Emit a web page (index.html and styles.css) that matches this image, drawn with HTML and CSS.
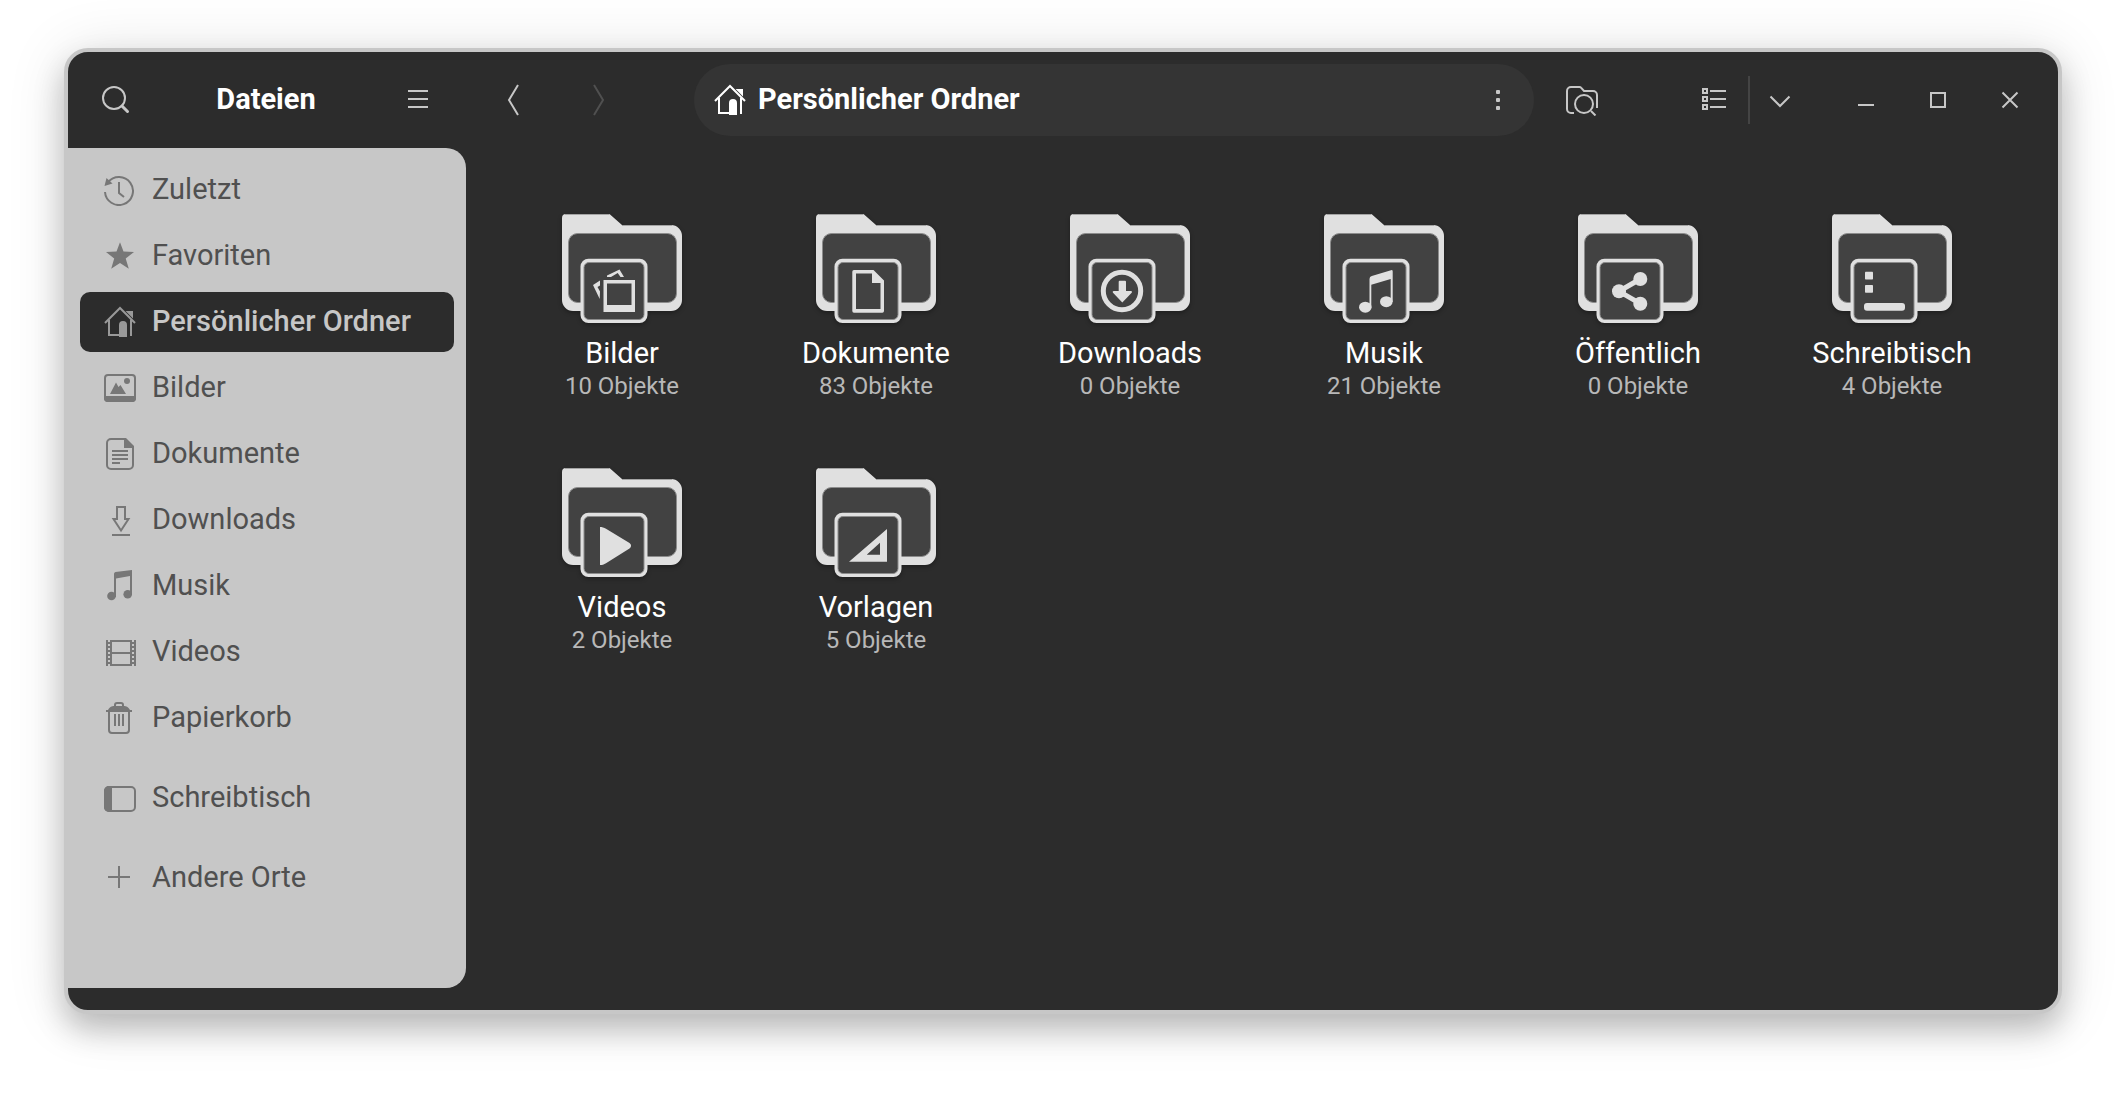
FILE: index.html
```html
<!DOCTYPE html>
<html lang="de">
<head>
<meta charset="utf-8">
<meta name="viewport" content="width=device-width, initial-scale=1">
<title>Dateien</title>
<link rel="stylesheet" href="styles.css">
</head>
<body>
<svg class="defs" aria-hidden="true">
  <symbol id="home" viewBox="0 0 32 32">
    <path d="M1 17 16 2 31 17M5 14V29H17M27 14V30" fill="none" stroke="currentColor" stroke-width="2"/>
    <path d="M16 30V19a3 3 0 0 1 3-3 3 3 0 0 1 3 3V30ZM24 6h4v4Z" fill="currentColor"/>
  </symbol>
  <symbol id="folder" viewBox="0 0 128 128">
    <path d="M8 6H51.500L64 17H113a11 11 0 0 1 11 11V92a11 11 0 0 1-11 11H15A11 11 0 0 1 4 92V10a4 4 0 0 1 4-4Z" fill="#e0e0e0"/>
    <path d="M7 6.500H51.500M64 17.500H114" stroke="#a4a4a4" fill="none"/>
    <rect x="10.500" y="25.500" width="108" height="69" rx="9" fill="#424242" stroke="#8c8c8c"/>
    <rect x="22.500" y="50.700" width="67" height="64.300" rx="8" fill="#e0e0e0"/>
    <rect x="26" y="54.500" width="60" height="57" rx="5" fill="#424242" stroke="#8c8c8c"/>
  </symbol>
</svg>

<div class="window">
  <header class="titlebar">
    <div class="titlebar-side">
      <button class="icon-button" type="button" aria-label="Suchen">
        <svg class="icon" viewBox="0 0 32 32"><circle cx="16" cy="14" r="11"/><path d="m24 22 5.500 5.500" stroke-width="3" stroke-linecap="round"/></svg>
      </button>
      <h1 class="title label">Dateien</h1>
      <button class="icon-button" type="button" aria-label="Menü">
        <svg class="icon" viewBox="0 0 32 32"><path d="M6 7H26M6 15H26M6 23H26"/></svg>
      </button>
    </div>
    <div class="titlebar-main">
      <div class="history">
        <button class="icon-button" type="button" aria-label="Zurück">
          <svg class="icon" viewBox="0 0 32 32"><path d="M20 1 11 16 20 31"/></svg>
        </button>
        <button class="icon-button" type="button" aria-label="Vor" disabled>
          <svg class="icon" viewBox="0 0 32 32"><path d="M10 1 19 16 10 31"/></svg>
        </button>
      </div>
      <div class="pathbar">
        <button class="crumb" type="button">
          <svg class="icon" viewBox="0 0 32 32"><use href="#home"/></svg>
          <span class="label">Persönlicher Ordner</span>
        </button>
        <button class="icon-button" type="button" aria-label="Ordnermenü">
          <svg class="icon solid" viewBox="0 0 32 32"><rect x="14" y="6" width="4" height="4" rx="1"/><rect x="14" y="14" width="4" height="4" rx="1"/><rect x="14" y="22" width="4" height="4" rx="1"/></svg>
        </button>
      </div>
      <button class="icon-button" type="button" aria-label="Ordner durchsuchen">
        <svg class="icon" viewBox="0 0 32 32"><path d="M8 29H5a4 4 0 0 1-4-4V7a4 4 0 0 1 4-4h8.500a2 2 0 0 1 1.500.700L18 7h9a4 4 0 0 1 4 4V24"/><circle cx="18" cy="20" r="9"/><path d="m25 27 4.500 4.500"/></svg>
      </button>
      <div class="view-switch">
        <button class="icon-button" type="button" aria-label="Listenansicht">
          <svg class="icon" viewBox="0 0 32 32"><path d="M5 5h4v4H5ZM5 13h4v4H5ZM5 21h4v4H5ZM12 7H28M12 15H28M12 23H28"/></svg>
        </button>
        <button class="icon-button view-options" type="button" aria-label="Ansichtsoptionen">
          <svg class="icon" viewBox="0 0 32 32"><path d="m6.500 12.500 9.500 9.500 9.500-9.500"/></svg>
        </button>
      </div>
      <div class="window-controls">
        <button class="icon-button" type="button" aria-label="Minimieren">
          <svg class="icon" viewBox="0 0 32 32"><path d="M8 21H24"/></svg>
        </button>
        <button class="icon-button" type="button" aria-label="Maximieren">
          <svg class="icon" viewBox="0 0 32 32"><path d="M9 9H23V23H9Z"/></svg>
        </button>
        <button class="icon-button" type="button" aria-label="Schließen">
          <svg class="icon" viewBox="0 0 32 32"><path d="M8.500 8.500 23.500 23.500M23.500 8.500 8.500 23.500"/></svg>
        </button>
      </div>
    </div>
  </header>

  <div class="body">
    <nav class="sidebar" aria-label="Orte">
      <a class="place" href="#zuletzt">
        <svg class="icon" viewBox="0 0 32 32"><path d="M1 18A14 14 0 1 0 4 8.300"/><path d="M15 8V19L20 23"/><path d="M.500 12 2.500 4 8.500 9.500Z" fill="currentColor" stroke="none"/></svg>
        <span class="label">Zuletzt</span>
      </a>
      <a class="place" href="#favoriten">
        <svg class="icon solid" viewBox="0 0 32 32"><path d="m16 2.300 3.500 9.200L30 12l-8.300 6.500 3.100 10.300L16 23l-8.800 5.800 3-10.300L2 12l10.500-.500Z"/></svg>
        <span class="label">Favoriten</span>
      </a>
      <a class="place active" href="#home-folder" aria-current="page">
        <svg class="icon" viewBox="0 0 32 32"><use href="#home"/></svg>
        <span class="label">Persönlicher Ordner</span>
      </a>
      <a class="place" href="#bilder">
        <svg class="icon" viewBox="0 0 32 32"><rect x="1" y="3" width="30" height="26" rx="3"/><path d="M0 24H32V26a4 4 0 0 1-4 4H4a4 4 0 0 1-4-4ZM6 22l6-11.500 2.500 4.500 2-2L22 22Z" fill="currentColor" stroke="none"/><circle cx="23" cy="9" r="3" fill="currentColor" stroke="none"/></svg>
        <span class="label">Bilder</span>
      </a>
      <a class="place" href="#dokumente">
        <svg class="icon" viewBox="0 0 32 32"><path d="M21 1H7A4 4 0 0 0 3 5V27a4 4 0 0 0 4 4H25a4 4 0 0 0 4-4V9"/><path d="M20 0H22L30 8v2H20Z" fill="currentColor" stroke="none"/><path d="M8 13H24M8 17H24M8 21H24M8 25H16"/></svg>
        <span class="label">Dokumente</span>
      </a>
      <a class="place" href="#downloads">
        <svg class="icon" viewBox="0 0 32 32"><path d="M13 15V3H21V15H24.500L17 26.500 9.500 15ZM8 31H26"/></svg>
        <span class="label">Downloads</span>
      </a>
      <a class="place" href="#musik">
        <svg class="icon solid" viewBox="0 0 32 32"><path d="M10 4a2 2 0 0 1 1.500-2L28 0V25H26V6L12 8.500V27H10Z"/><circle cx="7.500" cy="26" r="4.300"/><circle cx="23.700" cy="24.300" r="4.300"/></svg>
        <span class="label">Musik</span>
      </a>
      <a class="place" href="#videos">
        <svg class="icon" viewBox="0 0 32 32"><path d="M3 4V30M7 4V30M27 4V30M31 4V30M7 5H27M7 17H27M7 29H27"/><path d="M5 6V30M29 6V30" stroke-dasharray="2 2"/></svg>
        <span class="label">Videos</span>
      </a>
      <a class="place" href="#papierkorb">
        <svg class="icon" viewBox="0 0 32 32"><path d="M5 9V28a3 3 0 0 0 3 3H22a3 3 0 0 0 3-3V9M11 12V24M15 12V24M19 12V24M11 5V3a2 2 0 0 1 2-2h4a2 2 0 0 1 2 2V5"/><path d="M2 8H4C6 4 9 4 11 4h8c2 0 5 0 7 4h2v2H2Z" fill="currentColor" stroke="none"/></svg>
        <span class="label">Papierkorb</span>
      </a>
      <a class="place apart" href="#schreibtisch">
        <svg class="icon" viewBox="0 0 32 32"><rect x="1" y="5" width="30" height="24" rx="4"/><path d="M8 4V30H5a5 5 0 0 1-5-5V9a5 5 0 0 1 5-5Z" fill="currentColor" stroke="none"/></svg>
        <span class="label">Schreibtisch</span>
      </a>
      <a class="place apart" href="#andere">
        <svg class="icon" viewBox="0 0 32 32"><path d="M15 4V26M4 15H26"/></svg>
        <span class="label">Andere Orte</span>
      </a>
    </nav>

    <main class="files">
      <a class="file" href="#bilder">
        <svg class="folder" viewBox="0 0 128 128"><use href="#folder"/><path d="M45.500 72H77V104H45.500ZM49 75.500V97H73.500V75.500Z" fill-rule="evenodd"/><path d="M49 69v-1.500L61.500 61.500 66 69H62.500L59.700 65 53 69ZM42 72.500 35 77 41.700 91 42 83.500 39.500 79 42 77.500Z"/></svg>
        <span class="name">Bilder</span><span class="count">10 Objekte</span>
      </a>
      <a class="file" href="#dokumente">
        <svg class="folder" viewBox="0 0 128 128"><use href="#folder"/><path d="M42 62H61.500L72 72.500V103a1.700 1.700 0 0 1-1.700 1.700H42A1.700 1.700 0 0 1 40.300 103V63.700A1.700 1.700 0 0 1 42 62ZM44 65.500V101H68.500V75H60V65.500Z" fill-rule="evenodd"/></svg>
        <span class="name">Dokumente</span><span class="count">83 Objekte</span>
      </a>
      <a class="file" href="#downloads">
        <svg class="folder" viewBox="0 0 128 128"><use href="#folder"/><circle cx="56" cy="83" r="18.700" class="ring"/><path d="M54 72.700h5a1 1 0 0 1 1 1V83h5a1 1 0 0 1 .700 1.700L56.300 94.500 47 84.700A1 1 0 0 1 47.700 83h5V73.700a1 1 0 0 1 1-1Z"/></svg>
        <span class="name">Downloads</span><span class="count">0 Objekte</span>
      </a>
      <a class="file" href="#musik">
        <svg class="folder" viewBox="0 0 128 128"><use href="#folder"/><path d="M49.500 71a3 3 0 0 1 2.300-3L71 62.200a1.300 1.300 0 0 1 1.700 1.200V94H70.700V71L51.300 76.700V99H49.500Z"/><ellipse cx="45.300" cy="99.200" rx="6.300" ry="5.500"/><ellipse cx="66.300" cy="93.700" rx="6.300" ry="5.500"/></svg>
        <span class="name">Musik</span><span class="count">21 Objekte</span>
      </a>
      <a class="file" href="#oeffentlich">
        <svg class="folder" viewBox="0 0 128 128"><use href="#folder"/><path d="M66.300 71 45 83.300 66.300 95.700" class="ring"/><circle cx="45" cy="83.300" r="7"/><circle cx="66.300" cy="71" r="7"/><circle cx="66.300" cy="95.700" r="7"/></svg>
        <span class="name">Öffentlich</span><span class="count">0 Objekte</span>
      </a>
      <a class="file" href="#schreibtisch">
        <svg class="folder" viewBox="0 0 128 128"><use href="#folder"/><rect x="37" y="63.700" width="8" height="7.700" rx=".7"/><rect x="37" y="77" width="8" height="7.700" rx=".7"/><rect x="36" y="95" width="41" height="7.700" rx="3"/></svg>
        <span class="name">Schreibtisch</span><span class="count">4 Objekte</span>
      </a>
      <a class="file" href="#videos">
        <svg class="folder" viewBox="0 0 128 128"><use href="#folder"/><path d="M42 65c2 0 4 .500 6 1.800L71.500 81a3.200 3.200 0 0 1 0 5.500L48 101.200C46 102.500 44 103 42 103Z"/></svg>
        <span class="name">Videos</span><span class="count">2 Objekte</span>
      </a>
      <a class="file" href="#vorlagen">
        <svg class="folder" viewBox="0 0 128 128"><use href="#folder"/><path d="M37 99.700H75V67ZM54.700 92.700 68 80.700V92.700Z" fill-rule="evenodd"/></svg>
        <span class="name">Vorlagen</span><span class="count">5 Objekte</span>
      </a>
    </main>
  </div>
</div>
</body>
</html>
```
FILE: styles.css
```css
* {
  box-sizing: border-box;
}

body {
  margin: 0;
  min-height: 100vh;
  padding: 48px 64px 80px;
  display: flex;
  background: #fff;
  color: #fff;
  font: 29px/34px Roboto, "Noto Sans", sans-serif;
}

a {
  color: inherit;
  text-decoration: none;
}

button {
  padding: 0;
  border: 0;
  background: none;
  color: inherit;
  font: inherit;
}

.defs {
  position: absolute;
  width: 0;
  height: 0;
}

.window {
  flex: 1;
  display: flex;
  flex-direction: column;
  border: 4px solid #c7c7c7;
  border-radius: 24px;
  background: #2c2c2c;
  box-shadow: 0 16px 30px rgba(0, 0, 0, 0.22), 0 4px 60px rgba(0, 0, 0, 0.12);
}

.icon {
  display: block;
  flex: none;
  width: 32px;
  height: 32px;
  fill: none;
  stroke: currentColor;
  stroke-width: 2;
}

.icon.solid {
  fill: currentColor;
  stroke: none;
}

.icon-button {
  flex: none;
  color: #c7c7c7;
}

.icon-button:disabled {
  color: #505050;
}

/* Text beside an icon sits slightly above the icon's centre line */
.label {
  padding-bottom: 2px;
}

/* Title bar */

.titlebar {
  display: flex;
  height: 96px;
}

.titlebar-side {
  flex: none;
  width: 398px;
  padding: 0 32px 0 30px;
  display: flex;
  align-items: center;
  justify-content: space-between;
}

.title {
  margin: 0;
  font-size: 29px;
  font-weight: 700;
}

.titlebar-main {
  flex: 1;
  padding: 0 32px;
  display: flex;
  align-items: center;
}

.history {
  display: flex;
  gap: 54px;
  margin-right: 78px;
}

.pathbar {
  flex: 1;
  height: 72px;
  margin-right: 32px;
  padding: 0 20px;
  display: flex;
  align-items: center;
  justify-content: space-between;
  border-radius: 36px;
  background: #343434;
}

.crumb {
  display: flex;
  align-items: center;
  gap: 12px;
  font-weight: 700;
}

.view-switch {
  display: flex;
  align-items: center;
  gap: 18px;
  margin-left: 100px;
}

.view-options {
  padding: 8px 0 8px 14px;
  border-left: 2px solid #444;
}

.window-controls {
  display: flex;
  gap: 40px;
  margin-left: 54px;
}

/* Sidebar */

.body {
  flex: 1;
  display: flex;
  padding-bottom: 22px;
}

.sidebar {
  flex: none;
  width: 398px;
  padding: 12px;
  display: flex;
  flex-direction: column;
  gap: 6px;
  border-radius: 0 20px 20px 0;
  background: #c7c7c7;
  color: #505050;
}

.place {
  height: 60px;
  padding: 0 24px;
  display: flex;
  align-items: center;
  gap: 16px;
  border-radius: 10px;
  white-space: nowrap;
}

.place .icon {
  color: #777;
}

.place.active {
  background: #2c2c2c;
  color: #c7c7c7;
  font-weight: 500;
}

.place.active .icon {
  color: #999;
}

.place.apart {
  margin-top: 14px;
}

/* Folder grid */

.files {
  flex: 1;
  padding: 60px 39px 0 29px;
  display: grid;
  grid-template-columns: repeat(auto-fill, minmax(250px, 1fr));
  grid-auto-rows: 254px;
  align-content: start;
}

.file {
  display: flex;
  flex-direction: column;
  align-items: center;
}

.folder {
  width: 128px;
  height: 128px;
  fill: #e0e0e0;
  filter: drop-shadow(0 2px 2px rgba(0, 0, 0, 0.3));
}

.ring {
  fill: none;
  stroke: #e0e0e0;
  stroke-width: 5;
}

.count {
  margin-top: 2px;
  color: #b8b8b8;
  font-size: 24px;
  line-height: 28px;
}
```
